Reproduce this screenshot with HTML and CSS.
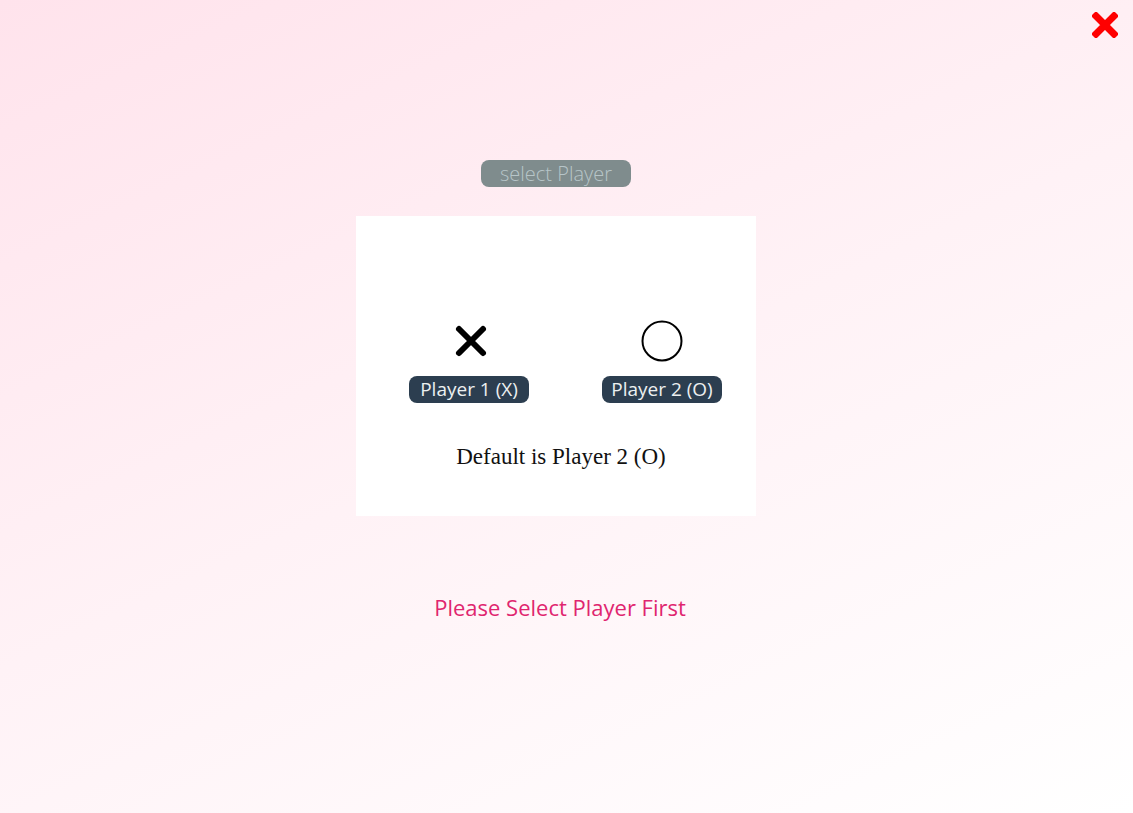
FILE: index.html
```html
<!DOCTYPE html>
<html>
<head>
<meta charset="utf-8">
<link rel="stylesheet" href="styles.css">
</head>
<body>
<button class="close" aria-label="close">
  <svg width="26" height="26" viewBox="0 0 26 26"><path d="M4 4 L22 22 M22 4 L4 22" stroke="#ff0000" stroke-width="7" stroke-linecap="square"/></svg>
</button>
<main class="main">
  <div class="title">select Player</div>
  <section class="card">
    <div class="players">
      <div class="player">
        <svg class="icon icon-x" width="34" height="34" viewBox="0 0 34 34"><path d="M5 5 L29 29 M29 5 L5 29" stroke="#000" stroke-width="6" stroke-linecap="round"/></svg>
        <span class="pill">Player 1 (X)</span>
      </div>
      <div class="player">
        <svg class="icon" width="42" height="42" viewBox="0 0 42 42"><circle cx="21" cy="21" r="19.5" fill="none" stroke="#000" stroke-width="2"/></svg>
        <span class="pill">Player 2 (O)</span>
      </div>
    </div>
    <p class="default">Default is Player 2 (O)</p>
  </section>
  <p class="message">Please Select Player First</p>
</main>
</body>
</html>
```

FILE: styles.css
```css
html, body {
  margin: 0;
  padding: 0;
  height: 100%;
}
body {
  background: linear-gradient(155deg, #ffe3ec 0%, #fff2f6 50%, #ffffff 100%);
  font-family: "Open Sans", "Noto Sans", sans-serif;
  position: relative;
  min-height: 813px;
  overflow: hidden;
}
.close {
  position: absolute;
  top: 12px;
  right: 15px;
  background: none;
  border: 0;
  padding: 0;
  width: 26px;
  height: 26px;
  cursor: pointer;
}
.close svg { display: block; }
.main {
  display: flex;
  flex-direction: column;
  align-items: center;
  padding-top: 160px;
  padding-right: 21px;
}
.title {
  background: #7f8c8d;
  color: #b7c5c8;
  font-weight: 300;
  font-size: 20px;
  line-height: 27px;
  height: 27px;
  width: 150px;
  text-align: center;
  border-radius: 8px;
  box-sizing: border-box;
}
.card {
  margin-top: 29px;
  width: 400px;
  height: 300px;
  background: #fff;
  box-sizing: border-box;
  padding-top: 104px;
}
.players {
  display: grid;
  grid-template-columns: 120px 120px;
  column-gap: 73px;
  padding-left: 53px;
}
.player {
  display: flex;
  flex-direction: column;
  align-items: center;
}
.icon { display: block; height: 42px; }
.icon-x { margin: 4px 0 4px 4px; height: 34px; }
.pill {
  margin-top: 14px;
  display: block;
  width: 120px;
  height: 27px;
  line-height: 27px;
  background: #2c3e50;
  color: #ecf0f1;
  font-size: 19px;
  text-align: center;
  border-radius: 8px;
}
.default {
  margin: 40px 0 0;
  padding-left: 10px;
  text-align: center;
  font-family: "Liberation Serif", serif;
  font-size: 23px;
  line-height: 28px;
  color: #111;
}
.message {
  margin: 77px 0 0;
  padding-left: 8px;
  color: #e0256f;
  font-size: 22px;
  font-weight: 500;
  line-height: 28px;
}
```
